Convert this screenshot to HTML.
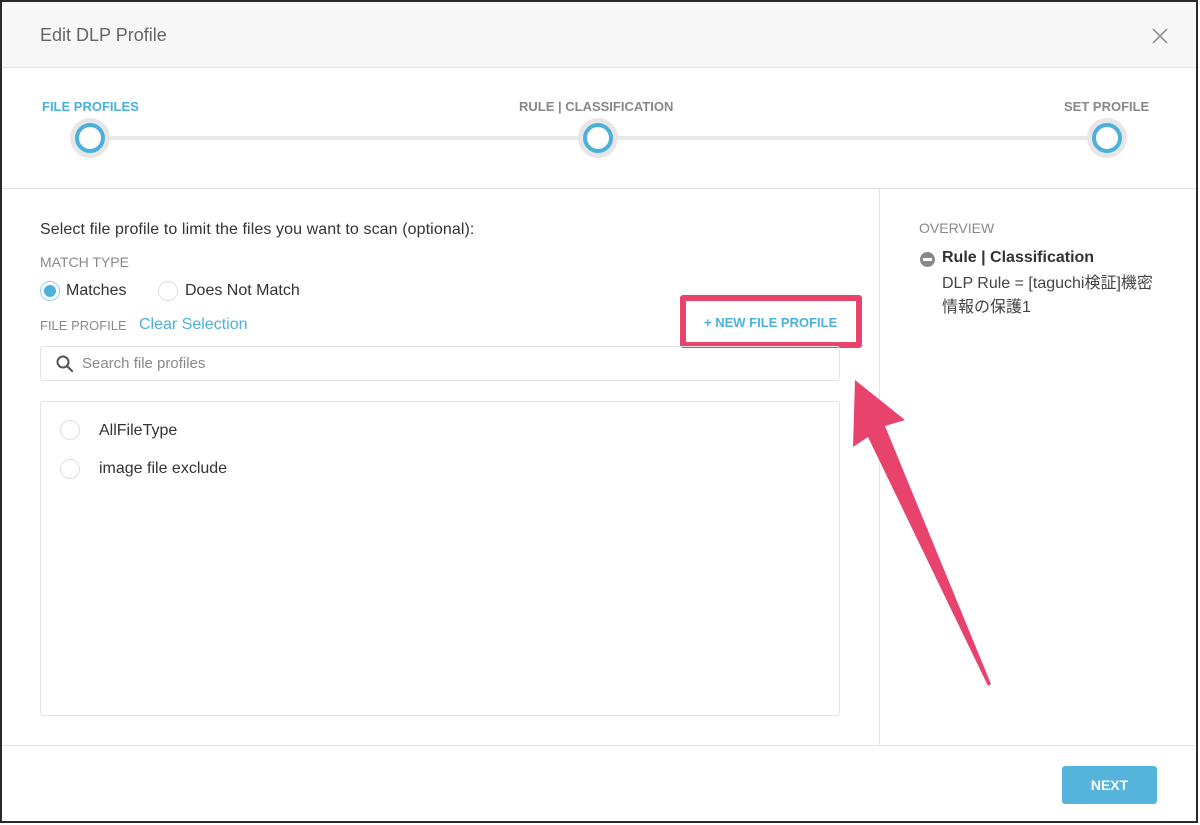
<!DOCTYPE html>
<html><head><meta charset="utf-8"><style>
*{margin:0;padding:0;box-sizing:border-box}
body{width:1200px;height:825px;background:#fff;font-family:"Liberation Sans","Noto Sans CJK JP",sans-serif;position:relative;overflow:hidden;color:#333}
.a{position:absolute}
.frame{left:0;top:0;width:1198px;height:823px;border:2px solid #2a2a2a}
.circ{width:40px;height:40px;border-radius:50%;background:#e6e6e6}
.circ div{position:absolute;left:5px;top:5px;width:30px;height:30px;border-radius:50%;border:4px solid #4bb0dc;background:#fff}
.lbl{font-size:13px;color:#888;}
.radio{width:20px;height:20px;border-radius:50%;border:1px solid #ddd;background:#fff}
</style></head><body>
<div class="a" style="left:2px;top:2px;width:1194px;height:66px;background:#f7f7f7;border-bottom:1px solid #e3e3e3"></div>
<div class="a" style="left:40px;top:25px;font-size:18px;color:#666">Edit DLP Profile</div>
<svg class="a" style="left:1152px;top:28px" width="16" height="16"><path d="M1 1L15 15M15 1L1 15" stroke="#888" stroke-width="1.5"/></svg>

<div class="a lbl" style="left:42px;top:99px;color:#4bb0dc;font-weight:bold">FILE PROFILES</div>
<div class="a lbl" style="left:519px;top:99px;font-weight:bold">RULE | CLASSIFICATION</div>
<div class="a lbl" style="left:1064px;top:99px;font-weight:bold">SET PROFILE</div>
<div class="a" style="left:90px;top:136px;width:1016px;height:4px;background:#e8e8e8"></div>
<div class="a circ" style="left:70px;top:118px"><div></div></div>
<div class="a circ" style="left:578px;top:118px"><div></div></div>
<div class="a circ" style="left:1087px;top:118px"><div></div></div>
<div class="a" style="left:2px;top:188px;width:1194px;height:1px;background:#e3e3e3"></div>
<div class="a" style="left:879px;top:189px;width:1px;height:556px;background:#e3e3e3"></div>

<div class="a" style="left:40px;top:221px;font-size:16px;color:#333;letter-spacing:0.1px">Select file profile to limit the files you want to scan (optional):</div>
<div class="a lbl" style="left:40px;top:254px;font-size:14px">MATCH TYPE</div>
<div class="a radio" style="left:40px;top:281px;border-color:#9ad0ea"><div style="position:absolute;left:3px;top:3px;width:12px;height:12px;border-radius:50%;background:#4bb0dc"></div></div>
<div class="a" style="left:66px;top:282px;font-size:16px">Matches</div>
<div class="a radio" style="left:158px;top:281px"></div>
<div class="a" style="left:185px;top:282px;font-size:16px">Does Not Match</div>
<div class="a lbl" style="left:40px;top:318px">FILE PROFILE</div>
<div class="a" style="left:139px;top:316px;font-size:16px;color:#4bb0dc">Clear Selection</div>

<div class="a" style="left:680px;top:295px;width:182px;height:53px;border:6px solid #e8436d;border-radius:3px"></div>
<div class="a" style="left:704px;top:315px;font-size:13px;font-weight:bold;color:#4bb0dc">+ NEW FILE PROFILE</div>

<div class="a" style="left:40px;top:346px;width:800px;height:35px;border:1px solid #e3e3e3;border-radius:3px"></div>
<svg class="a" style="left:56px;top:355px" width="18" height="18" viewBox="0 0 18 18"><circle cx="7" cy="7" r="5.5" fill="none" stroke="#555" stroke-width="2"/><path d="M11 11l5 5" stroke="#555" stroke-width="2.2" stroke-linecap="round"/></svg>
<div class="a" style="left:82px;top:355px;font-size:15px;color:#888">Search file profiles</div>

<div class="a" style="left:40px;top:401px;width:800px;height:315px;border:1px solid #e3e3e3;border-radius:3px"></div>
<div class="a radio" style="left:60px;top:420px"></div>
<div class="a" style="left:99px;top:422px;font-size:16px">AllFileType</div>
<div class="a radio" style="left:60px;top:459px"></div>
<div class="a" style="left:99px;top:460px;font-size:16px">image file exclude</div>

<div class="a lbl" style="left:919px;top:220px;font-size:14px">OVERVIEW</div>
<div class="a" style="left:920px;top:252px;width:15px;height:15px;border-radius:50%;background:#888"><div style="position:absolute;left:3px;top:6px;width:9px;height:3px;background:#fff"></div></div>
<div class="a" style="left:942px;top:249px;font-size:16px;font-weight:bold;color:#333">Rule | Classification</div>
<div class="a" style="left:942px;top:272px;font-size:16px;line-height:24px;color:#444;width:240px">DLP Rule = [taguchi検証]機密<br>情報の保護1</div>

<div class="a" style="left:2px;top:745px;width:1194px;height:1px;background:#e3e3e3"></div>
<div class="a" style="left:1062px;top:766px;width:95px;height:38px;background:#56b3dc;border-radius:3px;color:#fff;font-weight:bold;font-size:14px;text-align:center;line-height:38px">NEXT</div>

<svg class="a" style="left:0;top:0" width="1200" height="825">
<path d="M855 380 L905 420 L885 426 L991 684 L988 686 L868 437 L853 447 Z" fill="#e8436d"/>
</svg>
<div class="a frame"></div>
</body></html>
